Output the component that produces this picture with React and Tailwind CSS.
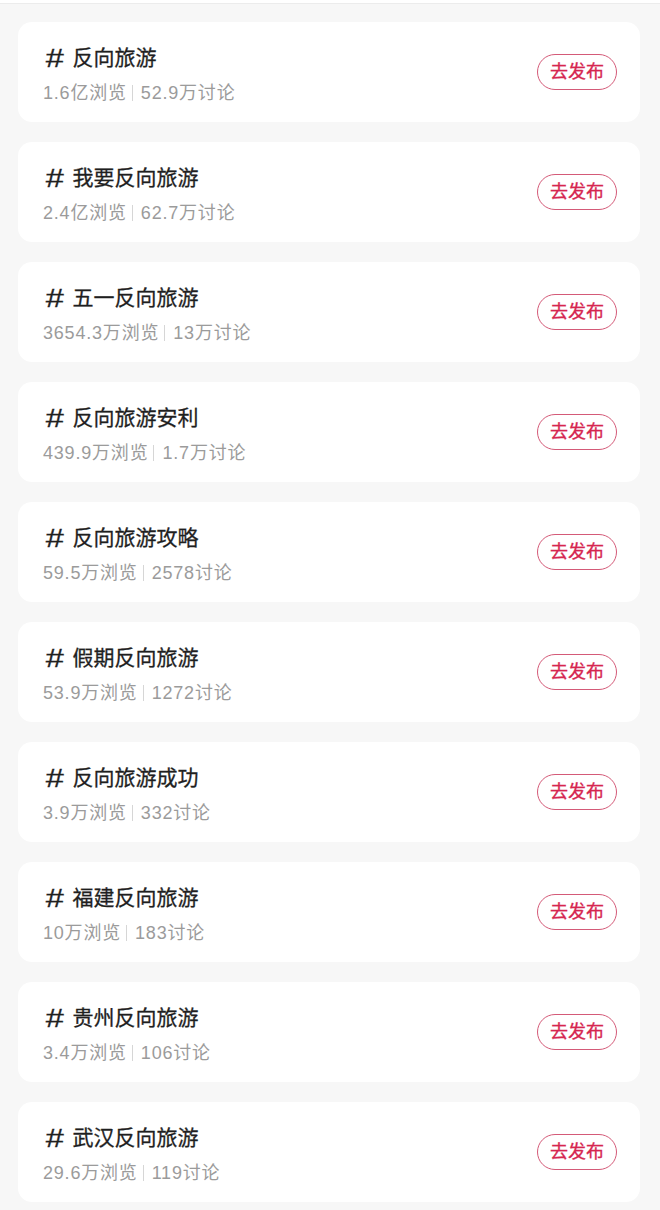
import React from 'react';

const topics = [
  { name: '反向旅游', views: '1.6亿浏览', talks: '52.9万讨论' },
  { name: '我要反向旅游', views: '2.4亿浏览', talks: '62.7万讨论' },
  { name: '五一反向旅游', views: '3654.3万浏览', talks: '13万讨论' },
  { name: '反向旅游安利', views: '439.9万浏览', talks: '1.7万讨论' },
  { name: '反向旅游攻略', views: '59.5万浏览', talks: '2578讨论' },
  { name: '假期反向旅游', views: '53.9万浏览', talks: '1272讨论' },
  { name: '反向旅游成功', views: '3.9万浏览', talks: '332讨论' },
  { name: '福建反向旅游', views: '10万浏览', talks: '183讨论' },
  { name: '贵州反向旅游', views: '3.4万浏览', talks: '106讨论' },
  { name: '武汉反向旅游', views: '29.6万浏览', talks: '119讨论' },
];

const TopicCard = ({ topic }) => (
  <div className="flex items-center justify-between h-[100px] bg-white rounded-[14px] pl-[26px] pr-[23px]">
    <div className="flex flex-col pt-[4px]">
      <div className="flex items-center h-[28px] text-[21px] leading-[28px] text-[#1f1f1f] [-webkit-text-stroke:0.3px_#1f1f1f]">
        <span className="inline-block italic text-[26px] scale-x-125 ml-[3px] mr-[11px]">#</span>
        <span>{topic.name}</span>
      </div>
      <div className="flex items-center mt-[9px] text-[18px] leading-[24px] text-[#9b9b9b] tracking-[0.8px] ml-[-1px]">
        <span>{topic.views}</span>
        <span className="ml-[5px] mr-[8px] w-px h-[16px] bg-[#d6d6d6]"></span>
        <span>{topic.talks}</span>
      </div>
    </div>
    <button className="w-[80px] h-[36px] rounded-full border-[1.5px] border-[#d45a78] text-[#d6264f] text-[18px] [-webkit-text-stroke:0.3px_#d6264f] flex items-center justify-center">
      去发布
    </button>
  </div>
);

const App = () => {
  return (
    <div className="w-[660px] min-h-[1210px] bg-[#f7f7f7]" style={{ fontFamily: '"Liberation Sans", "Noto Sans CJK SC", sans-serif' }}>
      <div className="h-[4px] bg-white border-b border-[#ececec]"></div>
      <div className="flex flex-col gap-[20px] pt-[18px] pl-[18px] pr-[20px] pb-[8px]">
        {topics.map((t) => (
          <TopicCard key={t.name} topic={t} />
        ))}
      </div>
    </div>
  );
};

export default App;
